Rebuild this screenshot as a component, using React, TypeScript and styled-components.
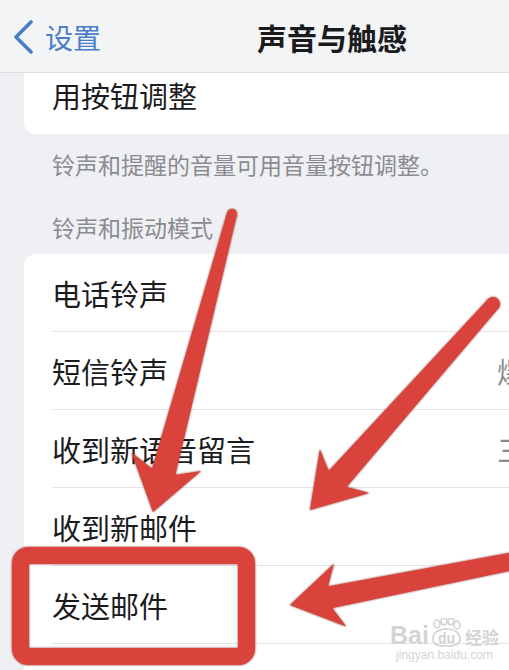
import styled, { createGlobalStyle } from "styled-components";

const GlobalStyle = createGlobalStyle`
  html, body {
    margin: 0;
    padding: 0;
    background: #eef0f3;
    overflow: hidden;
  }
  body {
    font-family: "Noto Sans CJK SC", "Noto Sans", sans-serif;
  }
`;

const Screen = styled.div`
  position: relative;
  width: 664px;
  height: 670px;
  overflow: hidden;
  background: #eef0f3;
`;

const NavBar = styled.header`
  position: relative;
  z-index: 2;
  height: 73px;
  display: grid;
  grid-template-columns: 1fr auto 1fr;
  align-items: center;
  padding-top: 2px;
  box-sizing: border-box;
  background: #f3f4f6;
  border-bottom: 1px solid #dcdee2;
`;

const BackButton = styled.div`
  display: flex;
  align-items: center;
  gap: 11px;
  padding-left: 12px;
  color: #4a7fc6;
  font-size: 28px;
`;

const NavTitle = styled.h1`
  margin: 0;
  font-size: 30px;
  font-weight: 700;
  color: #1b1b1d;
`;

const Content = styled.main`
  margin-top: -17px;
`;

const Card = styled.section`
  margin: 0 24px;
  background: #ffffff;
  border-radius: 12px;
  overflow: hidden;
`;

const Row = styled.div`
  height: 78px;
  display: flex;
  padding-left: 28px;
`;

const RowInner = styled.div<{ $last?: boolean }>`
  flex: 1;
  display: flex;
  align-items: center;
  padding-right: 26px;
  border-bottom: ${(p) => (p.$last ? "none" : "1px solid #e3e3e7")};
`;

const Label = styled.span`
  font-size: 29px;
  color: #1c1c1e;
`;

const Value = styled.span`
  margin-left: auto;
  margin-right: 18px;
  font-size: 29px;
  color: #8a8a8e;
`;

const Footer = styled.p`
  margin: 0;
  padding: 16px 52px 0;
  font-size: 23px;
  line-height: 28px;
  color: #8b8b90;
`;

const SectionHeader = styled.h2`
  margin: 0;
  padding: 35px 52px 13px;
  font-size: 23px;
  line-height: 28px;
  font-weight: 400;
  color: #8b8b90;
`;

const Overlay = styled.svg`
  position: absolute;
  left: 0;
  top: 0;
  z-index: 3;
  pointer-events: none;
`;

const Watermark = styled.div`
  position: absolute;
  left: 390px;
  top: 618px;
  z-index: 4;
  display: flex;
  flex-direction: column;
  align-items: center;
  color: #d4d4d6;
  text-shadow: 0 0 1px #ffffff;
`;

const MarkTop = styled.div`
  display: flex;
  align-items: flex-end;
  font-family: "Liberation Sans", Arial, sans-serif;
  font-size: 25px;
  font-weight: 700;
  line-height: 26px;
`;

const MarkCn = styled.span`
  font-family: "Noto Sans CJK SC", sans-serif;
  font-size: 17px;
  line-height: 22px;
  margin-left: 2px;
`;

const MarkUrl = styled.div`
  font-family: "Liberation Sans", Arial, sans-serif;
  font-size: 12px;
  line-height: 14px;
`;

type Pt = [number, number];

const arrowPoints = (
  tail: Pt,
  tip: Pt,
  tailW: number,
  neckW: number,
  headW: number,
  headL: number
) => {
  const dx = tip[0] - tail[0];
  const dy = tip[1] - tail[1];
  const len = Math.hypot(dx, dy);
  const ux = dx / len;
  const uy = dy / len;
  const nx = -uy;
  const ny = ux;
  const at = (d: number, off: number): Pt => [
    tail[0] + ux * d + nx * off,
    tail[1] + uy * d + ny * off,
  ];
  const neck = len - headL * 0.8;
  const base = len - headL;
  return [
    at(0, tailW / 2),
    at(neck, neckW / 2),
    at(base, headW / 2),
    at(len, 0),
    at(base, -headW / 2),
    at(neck, -neckW / 2),
    at(0, -tailW / 2),
  ]
    .map((p) => p.map((v) => v.toFixed(1)).join(","))
    .join(" ");
};

const arrows: { tail: Pt; tip: Pt; tw: number; nw: number; hw: number; hl: number }[] = [
  { tail: [232, 214], tip: [153, 512], tw: 10, nw: 24, hw: 72, hl: 52 },
  { tail: [493, 304], tip: [310, 510], tw: 14, nw: 24, hw: 66, hl: 52 },
  { tail: [545, 555], tip: [290, 605], tw: 17, nw: 22, hw: 64, hl: 51 },
];

const rows = [
  { label: "电话铃声", value: "" },
  { label: "短信铃声", value: "爆米花" },
  { label: "收到新语音留言", value: "三全音" },
  { label: "收到新邮件", value: "无" },
  { label: "发送邮件", value: "嗖" },
  { label: "日历提醒", value: "和弦" },
];

const Chevron = () => (
  <svg width="12" height="20" viewBox="0 0 12 20">
    <path d="M2 2 L10 10 L2 18" fill="none" stroke="#c4c4c7" strokeWidth="2.5" strokeLinecap="round" strokeLinejoin="round" />
  </svg>
);

const App = () => {
  return (
    <Screen>
      <GlobalStyle />
      <NavBar>
        <BackButton>
          <svg width="22" height="34" viewBox="0 0 22 34">
            <path d="M19 2 L4 17 L19 32" fill="none" stroke="#4a7fc6" strokeWidth="3.6" strokeLinecap="round" strokeLinejoin="round" />
          </svg>
          设置
        </BackButton>
        <NavTitle>声音与触感</NavTitle>
        <div />
      </NavBar>
      <Content>
        <Card>
          <Row>
            <RowInner $last>
              <Label>用按钮调整</Label>
            </RowInner>
          </Row>
        </Card>
        <Footer>铃声和提醒的音量可用音量按钮调整。</Footer>
        <SectionHeader>铃声和振动模式</SectionHeader>
        <Card>
          {rows.map((r, i) => (
            <Row key={r.label}>
              <RowInner $last={i === rows.length - 1}>
                <Label>{r.label}</Label>
                <Value>{r.value}</Value>
                <Chevron />
              </RowInner>
            </Row>
          ))}
        </Card>
      </Content>
      <Overlay width="664" height="670" viewBox="0 0 664 670">
        <g style={{ filter: "drop-shadow(0 0 1.2px rgba(110, 20, 15, 0.85))" }}>
          {arrows.map((a, i) => (
            <g key={i} fill="#d9433b">
              <polygon points={arrowPoints(a.tail, a.tip, a.tw, a.nw, a.hw, a.hl)} />
              <circle cx={a.tail[0]} cy={a.tail[1]} r={a.tw / 2} />
            </g>
          ))}
          <rect x="20.5" y="555.5" width="226" height="101" rx="8" fill="none" stroke="#d9433b" strokeWidth="17" />
        </g>
      </Overlay>
      <Watermark>
        <MarkTop>
          Bai
          <svg width="34" height="30" viewBox="0 0 34 30">
            <g fill="none" stroke="#d2d2d4" strokeWidth="1.6">
              <ellipse cx="8" cy="6" rx="3" ry="4" />
              <ellipse cx="15" cy="3.5" rx="3" ry="3.2" />
              <ellipse cx="22" cy="3.5" rx="3" ry="3.2" />
              <ellipse cx="28" cy="7" rx="3" ry="4" />
              <path d="M4 21 C4 13 12 11 17 11 C24 11 31 14 31 21 C31 27 25 28 17 28 C9 28 4 27 4 21 Z" />
            </g>
            <text x="17.5" y="25" textAnchor="middle" fontFamily="Liberation Sans, Arial, sans-serif" fontSize="14" fontWeight="700" fill="#d2d2d4">du</text>
          </svg>
          <MarkCn>经验</MarkCn>
        </MarkTop>
        <MarkUrl>jingyan.baidu.com</MarkUrl>
      </Watermark>
    </Screen>
  );
};

export default App;
